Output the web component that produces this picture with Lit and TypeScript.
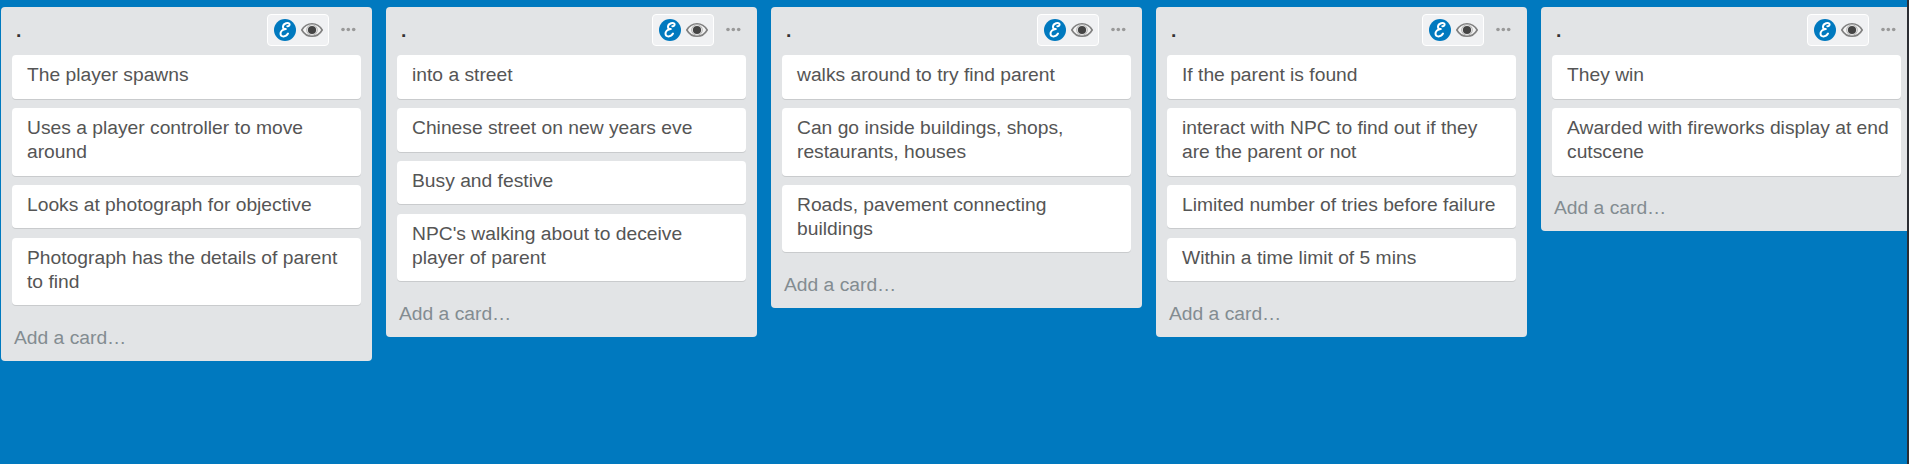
import { LitElement, html, css } from "lit";
import { customElement, property } from "lit/decorators.js";

interface BoardList {
  title: string;
  cards: string[];
}

const LISTS: BoardList[] = [
  {
    title: ".",
    cards: [
      "The player spawns",
      "Uses a player controller to move around",
      "Looks at photograph for objective",
      "Photograph has the details of parent to find",
    ],
  },
  {
    title: ".",
    cards: [
      "into a street",
      "Chinese street on new years eve",
      "Busy and festive",
      "NPC's walking about to deceive player of parent",
    ],
  },
  {
    title: ".",
    cards: [
      "walks around to try find parent",
      "Can go inside buildings, shops, restaurants, houses",
      "Roads, pavement connecting buildings",
    ],
  },
  {
    title: ".",
    cards: [
      "If the parent is found",
      "interact with NPC to find out if they are the parent or not",
      "Limited number of tries before failure",
      "Within a time limit of 5 mins",
    ],
  },
  {
    title: ".",
    cards: ["They win", "Awarded with fireworks display at end cutscene"],
  },
];

@customElement("board-list")
export class BoardListElement extends LitElement {
  @property({ attribute: false }) list!: BoardList;

  static styles = css`
    :host {
      display: block;
      flex: 0 0 371px;
      box-sizing: border-box;
      padding: 7px 11px 0;
      background: #e2e4e6;
      border-radius: 4px;
      color: #555;
      font-size: 19.25px;
      line-height: 24px;
    }
    .header {
      display: flex;
      align-items: flex-start;
      height: 41px;
    }
    .title {
      flex: 1;
      margin: 0;
      padding: 5px 0 0 4px;
      font-size: 19.25px;
      line-height: 24px;
      font-weight: 700;
      color: #333;
    }
    .tools {
      display: flex;
      align-items: center;
      gap: 5px;
      box-sizing: border-box;
      width: 62px;
      height: 32px;
      padding: 0 6px;
      border: 1px solid #fff;
      border-radius: 4px;
      background: #f0f1f3;
    }
    .menu {
      margin: 13px 5px 0 11px;
    }
    svg {
      display: block;
      flex: none;
    }
    .cards {
      display: flex;
      flex-direction: column;
      gap: 9px;
    }
    .card {
      padding: 8px 10px 12px 15px;
      background: #fff;
      border-radius: 4px;
      box-shadow: 0 1px 0 #c9cbcd;
    }
    .card:nth-child(n + 3) {
      padding-bottom: 11px;
      margin-bottom: 1px;
    }
    .add {
      padding: 20px 2px 11px;
      color: #838c91;
    }
  `;

  render() {
    return html`
      <div class="header">
        <h2 class="title">${this.list.title}</h2>
        <div class="tools">
          <svg width="22" height="22" viewBox="0 0 22 22">
            <circle cx="11" cy="11" r="11" fill="#0079bf" />
            <path
              d="M13.300 7.200C14.800 7.400 16 6.200 15.500 4.900C14.600 3 9.400 4.200 9 7.500C8.800 9.300 10 10.200 11.800 10C8.600 10.200 6.200 12.500 6.500 15C6.900 18.200 11.800 18.300 14 14.600"
              fill="none"
              stroke="#fff"
              stroke-width="2"
              stroke-linecap="round"
              stroke-linejoin="round"
            />
          </svg>
          <svg width="22" height="16" viewBox="0 0 22 16">
            <path
              d="M.8 8C3.200 3.800 6.800 1.700 11 1.700S18.800 3.800 21.200 8C18.800 12.200 15.200 14.300 11 14.300S3.200 12.200.8 8Z"
              fill="#f3f3f3"
              stroke="#808080"
              stroke-width="1.600"
            />
            <circle cx="11" cy="8" r="5.300" fill="none" stroke="#aaa" stroke-width=".9" />
            <circle cx="11" cy="8" r="4.100" fill="#444" />
          </svg>
        </div>
        <svg class="menu" width="16" height="6" viewBox="0 0 16 6">
          <g fill="#999">
            <circle cx="3" cy="2.500" r="1.800" />
            <circle cx="8.300" cy="2.500" r="1.800" />
            <circle cx="13.700" cy="2.500" r="1.800" />
          </g>
        </svg>
      </div>
      <div class="cards">
        ${this.list.cards.map((text) => html`<div class="card">${text}</div>`)}
      </div>
      <div class="add">Add a card…</div>
    `;
  }
}

@customElement("app-root")
export class AppRoot extends LitElement {
  static styles = css`
    :host {
      display: flex;
      height: 464px;
      overflow: hidden;
      background: #0079bf;
      font-family: "Liberation Sans", Arial, sans-serif;
    }
    .board {
      display: flex;
      flex: 1;
      min-width: 0;
      align-items: flex-start;
      gap: 14px;
      box-sizing: border-box;
      padding: 7px 0 0 1px;
      overflow: hidden;
    }
    .edge {
      flex: 0 0 2px;
      background: #2b2d33;
    }
  `;

  render() {
    return html`
      <div class="board">
        ${LISTS.map((list) => html`<board-list .list=${list}></board-list>`)}
      </div>
      <div class="edge"></div>
    `;
  }
}
